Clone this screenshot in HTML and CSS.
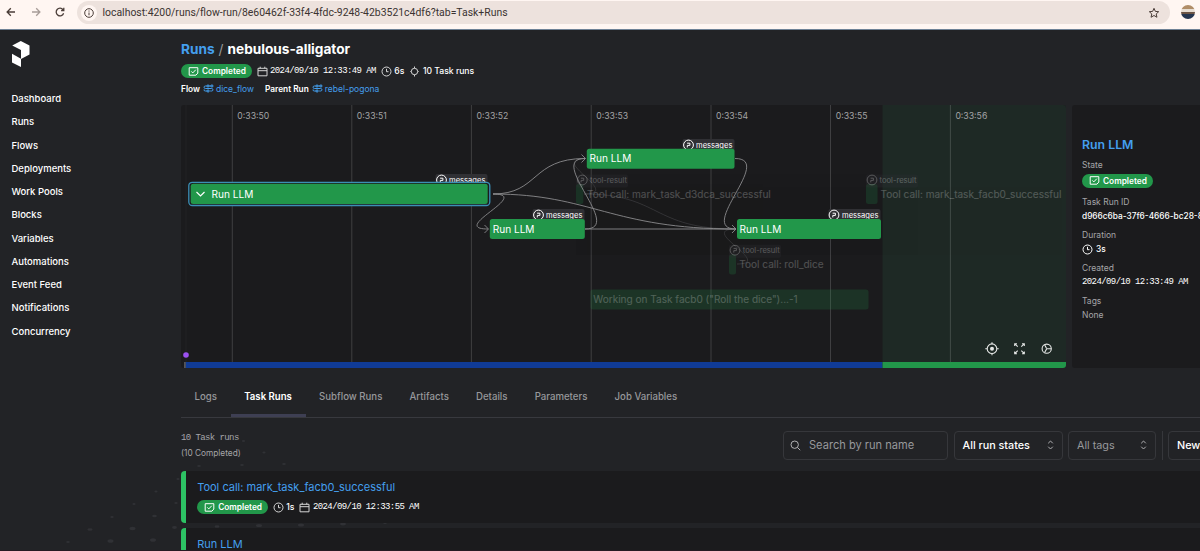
FILE: index.html
```html
<!DOCTYPE html>
<html lang="en">
<head>
    <meta charset="UTF-8">
    <meta name="viewport" content="width=device-width, initial-scale=1.0">
    <title>nebulous-alligator</title>
    <link rel="stylesheet" href="styles.css">
</head>
<body>
    <!-- icons -->
    <svg class="defs" width="0" height="0">
        <symbol id="i-check" viewBox="0 0 11 9"><path d="M1.2.7h8.6v5.4L7.9 8.2H1.2z M3.3 4.4l1.5 1.5 3-3.2"/></symbol>
        <symbol id="i-calendar" viewBox="0 0 11 11"><path d="M1 2.3h9v7.5H1z M1 4.7h9 M3.2.7v1.6 M7.8.7v1.6"/></symbol>
        <symbol id="i-clock" viewBox="0 0 11 11"><path d="M10 5.5a4.5 4.5 0 1 1-9 0 4.5 4.5 0 0 1 9 0z M5.5 2.8v2.9h2"/></symbol>
        <symbol id="i-task" viewBox="0 0 11 11"><path d="M8.7 5.5a3.2 3.2 0 1 1-6.4 0 3.2 3.2 0 0 1 6.4 0z M5.5.5v1.8 M5.5 8.7v1.8 M2.3 5.5h-.9 M8.7 5.5h.9"/></symbol>
        <symbol id="i-flow" viewBox="0 0 11 9"><path d="M4 2H2.3a1.25 1.25 0 0 0 0 2.5h6.4a1.25 1.25 0 0 1 0 2.5H7.2 M4 7H2.3a1.25 1.25 0 0 1-1.2-1.6 M4.2 1.1h1.6v1.8H4.2z M8 1.1h1.8v1.8H8z M4.2 6.1h1.8v1.8H4.2z M5.8 2H8"/></symbol>
        <symbol id="i-updown" viewBox="0 0 7 10"><path d="M1.2 3.3L3.5 1l2.3 2.3 M1.2 6.7L3.5 9l2.3-2.3"/></symbol>
        <symbol id="i-artifact" viewBox="0 0 12 12"><circle cx="6" cy="6" r="4.9"/><path d="M4.8 8.4V6.4h2.6V4.2H4.6"/></symbol>
    </svg>

    <div class="browser">
        <div class="nav-buttons">
            <svg width="10" height="10" viewBox="0 0 10 10"><path d="M9 5H1.2M4.8 1.2L1.1 5l3.7 3.8"/></svg>
            <svg class="muted" width="10" height="10" viewBox="0 0 10 10"><path d="M1 5h7.8M5.2 1.2L8.9 5 5.2 8.8"/></svg>
            <svg width="10" height="10" viewBox="0 0 10 10"><path d="M8.6 6.2A3.8 3.8 0 1 1 8 2.7M8.8.8v2.7H6.1"/></svg>
        </div>
        <div class="address">
            <span class="site-info"><svg width="10" height="10" viewBox="0 0 10 10"><circle cx="5" cy="5" r="4.3"/><path d="M5 4.5v2.8M5 2.5v1.1"/></svg></span>
            <span class="url">localhost:4200/runs/flow-run/8e60462f-33f4-4fdc-9248-42b3521c4df6?tab=Task+Runs</span>
            <svg class="star" width="12" height="12" viewBox="0 0 12 12"><path d="M6 1.3l1.35 3.1 3.35.3-2.5 2.25.75 3.3L6 8.5l-2.95 1.75.75-3.3L1.3 4.7l3.35-.3z"/></svg>
        </div>
        <div class="avatar"></div>
    </div>

    <div class="app">
        <svg class="dots" width="400" height="130" viewBox="0 421 400 130">
            <ellipse cx="68" cy="542" rx="1.8" ry="1"/><ellipse cx="90" cy="529.5" rx="2.6" ry="1.3"/><ellipse cx="110.5" cy="541" rx="3" ry="1.8"/>
            <ellipse cx="112" cy="517" rx="1.7" ry="1"/><ellipse cx="132.5" cy="528.5" rx="3" ry="1.7"/><ellipse cx="134" cy="504" rx="1.6" ry="1"/>
            <ellipse cx="153" cy="540" rx="3" ry="1.8"/><ellipse cx="154.5" cy="516" rx="2.3" ry="1.3"/><ellipse cx="156" cy="491.5" rx="1.6" ry="1"/>
            <ellipse cx="176" cy="503" rx="1.7" ry="1"/><ellipse cx="174.5" cy="527.5" rx="2.4" ry="1.4"/><ellipse cx="178" cy="479" rx="1.6" ry="1"/>
            <ellipse cx="199" cy="466" rx="1.8" ry="1"/><ellipse cx="242" cy="465" rx="1.8" ry="1"/><ellipse cx="284" cy="464" rx="1.8" ry="1"/>
            <ellipse cx="264" cy="452.5" rx="1.6" ry="1"/><ellipse cx="243.5" cy="441" rx="1.6" ry="1"/>
            <ellipse cx="217" cy="526.5" rx="2.4" ry="1.2"/><ellipse cx="259" cy="525.5" rx="3" ry="1.5"/><ellipse cx="301" cy="525" rx="3" ry="1.5"/>
            <ellipse cx="343" cy="524" rx="3" ry="1.4"/><ellipse cx="385" cy="523" rx="1.8" ry="1"/>
        </svg>

        <div class="sidebar">
            <svg class="logo" width="18" height="26" viewBox="0 0 18 26"><path d="M8.8 0L17.5 4.5v9L9 18V9L.2 4.5zM0 12.7L9 17.8V26l-9-4.4z"/></svg>
            <a>Dashboard</a>
            <a>Runs</a>
            <a>Flows</a>
            <a>Deployments</a>
            <a>Work Pools</a>
            <a>Blocks</a>
            <a>Variables</a>
            <a>Automations</a>
            <a>Event Feed</a>
            <a>Notifications</a>
            <a>Concurrency</a>
        </div>

        <div class="content">
            <h1><a>Runs</a><i>/</i>nebulous-alligator</h1>
            <div class="meta">
                <span class="badge"><svg width="11" height="9"><use href="#i-check"/></svg>Completed</span>
                <svg class="icon" width="11" height="11"><use href="#i-calendar"/></svg>
                <span class="mono">2024/09/10 12:33:49 AM</span>
                <svg class="icon" width="11" height="11"><use href="#i-clock"/></svg>
                <span>6s</span>
                <svg class="icon" width="11" height="11"><use href="#i-task"/></svg>
                <span>10 Task runs</span>
            </div>
            <div class="parents">
                <b>Flow</b><svg width="11" height="9"><use href="#i-flow"/></svg><a>dice_flow</a>
                <b class="second">Parent Run</b><svg width="11" height="9"><use href="#i-flow"/></svg><a>rebel-pogona</a>
            </div>

            <div class="panels">
                <svg class="graph" width="885" height="263" viewBox="0 0 885 263">
                    <rect class="tail" x="701.5" y="0" width="183.5" height="257"/>
                    <path class="start" d="M5 0V257"/>
                    <path class="grid" d="M51.3 0V257M170.8 0V257M290.4 0V257M410.2 0V257M530 0V257M649.5 0V257M769.4 0V257"/>
                    <g class="times">
                        <text x="56.3" y="14">0:33:50</text>
                        <text x="175.8" y="14">0:33:51</text>
                        <text x="295.6" y="14">0:33:52</text>
                        <text x="415.2" y="14">0:33:53</text>
                        <text x="535" y="14">0:33:54</text>
                        <text x="654.7" y="14">0:33:55</text>
                        <text x="774.4" y="14">0:33:56</text>
                    </g>

                    <!-- dimmed runs -->
                    <g class="faded-edges">
                        <path d="M403 89C443 89 365 53.5 405 53.5M403 89C480 89 470 124 555 124M556 159C594 159 515 124 555 124"/>
                    </g>
                    <g class="faded">
                        <rect class="run" x="395" y="79" width="7.3" height="20" rx="2.5"/>
                        <rect class="run" x="685" y="79" width="11.5" height="20" rx="2.5"/>
                        <rect class="run" x="548" y="149.5" width="7" height="20" rx="2.5"/>
                        <rect class="run" x="409.5" y="184.5" width="278" height="20" rx="2.5"/>
                    </g>
                    <g class="faded-text">
                        <text x="406" y="92.5">Tool call: mark_task_d3dca_successful</text>
                        <text x="699.6" y="92.5">Tool call: mark_task_facb0_successful</text>
                        <text x="558.3" y="162.8">Tool call: roll_dice</text>
                        <text x="412.3" y="197.8">Working on Task facb0 ("Roll the dice")...-1</text>
                    </g>
                    <g class="artifact dim">
                        <rect x="395" y="69.5" width="52" height="13" rx="2"/><use href="#i-artifact" x="395.3" y="69" width="12" height="12"/><text x="409" y="78">tool-result</text>
                        <rect x="685" y="69.5" width="52" height="13" rx="2"/><use href="#i-artifact" x="685" y="69" width="12" height="12"/><text x="698.6" y="78">tool-result</text>
                        <rect x="548" y="139.7" width="52" height="13" rx="2"/><use href="#i-artifact" x="548" y="139.2" width="12" height="12"/><text x="561.8" y="148.2">tool-result</text>
                    </g>

                    <g class="artifact">
                        <rect x="254.5" y="69" width="52" height="13" rx="2"/><use href="#i-artifact" x="254.5" y="69" width="12" height="12"/><text x="268" y="78">messages</text>
                        <rect x="351.5" y="104" width="52" height="13" rx="2"/><use href="#i-artifact" x="351.5" y="104" width="12" height="12"/><text x="365" y="113">messages</text>
                        <rect x="501.5" y="34" width="52" height="13" rx="2"/><use href="#i-artifact" x="501.5" y="34" width="12" height="12"/><text x="515" y="43">messages</text>
                        <rect x="647.5" y="104" width="52" height="13" rx="2"/><use href="#i-artifact" x="647" y="104" width="12" height="12"/><text x="661" y="113">messages</text>
                    </g>

                    <g class="edges">
                        <path d="M312 89C358 89 350 53.5 404 53.5"/>
                        <path d="M312 89C352 89 267 124 307 124"/>
                        <path d="M312 89C410 89 430 124 555 124"/>
                        <path d="M404 124H555"/>
                        <path d="M404 124C444 124 365 53.5 404 53.5"/>
                        <path d="M554 53.5C594 53.5 515 124 555 124"/>
                        <path d="M400.5 49.5l4 4-4 4M303.5 120l4 4-4 4M551 120l4 4-4 4"/>
                    </g>

                    <rect class="selected" x="7.8" y="77.3" width="301" height="23.2" rx="3.5"/>
                    <rect class="run" x="9.7" y="78.7" width="297" height="20.3" rx="2.5"/>
                    <rect class="run" x="308.8" y="114" width="95" height="20" rx="2.5"/>
                    <rect class="run" x="405.8" y="43.8" width="147.7" height="20" rx="2.5"/>
                    <rect class="run" x="556" y="114" width="144" height="20" rx="2.5"/>
                    <path class="chevron" d="M15.5 87l4 4 4-4"/>
                    <g class="run-names">
                        <text x="30.5" y="92.5">Run LLM</text>
                        <text x="311.7" y="127.6">Run LLM</text>
                        <text x="408.6" y="57.2">Run LLM</text>
                        <text x="558.6" y="127.6">Run LLM</text>
                    </g>

                    <circle class="event" cx="5" cy="250" r="2.8"/>
                    <rect class="running" x="4.5" y="257" width="697" height="6"/>
                    <rect class="grip" x="3" y="257" width="1.8" height="6"/>
                    <rect class="done" x="701.5" y="257" width="183.5" height="6"/>

                    <g class="controls">
                        <circle cx="811" cy="243.7" r="4.8"/><circle class="fill" cx="811" cy="243.7" r="2"/>
                        <path d="M811 237.2v2M811 248.2v2M804.3 243.7h2M815.7 243.7h2"/>
                        <path d="M833.7 241v-2.3h2.3M833.7 238.7l3 3M841 238.7h2.3v2.3M843.3 238.7l-3 3M833.7 246.4v2.3h2.3M833.7 248.7l3-3M841 248.7h2.3v-2.3M843.3 248.7l-3-3"/>
                        <circle cx="865.7" cy="243.7" r="4.6"/>
                        <path d="M863.6 239.8l2 3.6M863.6 247.6l2-3.6M865.7 243.7h4.6"/>
                    </g>
                </svg>

                <div class="details">
                    <h2>Run LLM</h2>
                    <label>State</label>
                    <div class="value state"><span class="badge"><svg width="11" height="9"><use href="#i-check"/></svg>Completed</span></div>
                    <label>Task Run ID</label>
                    <div class="value">d966c6ba-37f6-4666-bc28-8</div>
                    <label>Duration</label>
                    <div class="value"><svg width="11" height="11"><use href="#i-clock"/></svg>3s</div>
                    <label>Created</label>
                    <div class="value mono">2024/09/10 12:33:49 AM</div>
                    <label>Tags</label>
                    <div class="value none">None</div>
                </div>
            </div>

            <div class="tabs">
                <a>Logs</a>
                <a class="active">Task Runs</a>
                <a>Subflow Runs</a>
                <a>Artifacts</a>
                <a>Details</a>
                <a>Parameters</a>
                <a>Job Variables</a>
            </div>

            <div class="toolbar">
                <div class="count">
                    <div class="mono">10 Task runs</div>
                    <div>(10 Completed)</div>
                </div>
                <div class="field search">
                    <svg width="11" height="11" viewBox="0 0 11 11"><circle cx="4.7" cy="4.7" r="3.7"/><path d="M7.4 7.4l2.8 2.8"/></svg>
                    Search by run name
                </div>
                <div class="field states">All run states<svg width="7" height="10"><use href="#i-updown"/></svg></div>
                <div class="field tags">All tags<svg width="7" height="10"><use href="#i-updown"/></svg></div>
                <div class="divider"></div>
                <div class="field sort">New</div>
            </div>

            <div class="run-card">
                <a>Tool call: mark_task_facb0_successful</a>
                <div class="meta">
                    <span class="badge"><svg width="11" height="9"><use href="#i-check"/></svg>Completed</span>
                    <svg class="icon" width="11" height="11"><use href="#i-clock"/></svg>
                    <span>1s</span>
                    <svg class="icon" width="11" height="11"><use href="#i-calendar"/></svg>
                    <span class="mono">2024/09/10 12:33:55 AM</span>
                </div>
            </div>
            <div class="run-card">
                <a>Run LLM</a>
            </div>
        </div>
    </div>
</body>
</html>
```
FILE: styles.css
```css
* {
    box-sizing: border-box;
}
body {
    margin: 0;
    width: 1200px;
    height: 551px;
    overflow: hidden;
    font-family: Inter, sans-serif;
    font-size: 9px;
    color: #fff;
    background-color: #222326;
}
svg {
    flex: none;
    fill: none;
    stroke: currentColor;
    stroke-width: 1;
}
.defs {
    position: absolute;
}
.mono {
    font-family: "Liberation Mono", monospace;
    font-size: 9px;
    letter-spacing: -0.59px;
    white-space: pre;
}

/* browser bar */
.browser {
    display: flex;
    height: 30px;
    padding: 1px 0 0 6px;
    background-color: #fff6f2;
    border-bottom: 1.5px solid #6f8296;
    color: #4a3d38;
}
.nav-buttons {
    display: flex;
    gap: 14.5px;
    padding-top: 6px;
    width: 71px;
}
.nav-buttons svg {
    stroke-width: 1.3;
}
.nav-buttons .muted {
    color: #a89d99;
}
.address {
    display: flex;
    align-items: center;
    width: 1093px;
    height: 23px;
    padding: 0 10px 0 4px;
    border-radius: 12px;
    background-color: #ede2dd;
}
.site-info {
    display: flex;
    align-items: center;
    justify-content: center;
    width: 16px;
    height: 16px;
    border-radius: 50%;
    background-color: #fff6f2;
}
.url {
    flex: 1;
    margin-left: 5.5px;
    font-family: Roboto, sans-serif;
    font-size: 10.43px;
    color: #3b3331;
}
.avatar {
    width: 14px;
    height: 14px;
    margin: 4px 0 0 11px;
    border-radius: 50%;
    background: linear-gradient(#b08d68 0 30%, #e6ddd2 30% 48%, #6b5444 48% 62%, #24354f 62%);
}

/* layout */
.app {
    position: relative;
    display: flex;
    height: 521px;
    overflow: hidden;
    border-bottom: 1px solid #271b22;
}
.dots {
    position: absolute;
    left: 0;
    bottom: -1px;
    fill: #303135;
    stroke: none;
}
.sidebar {
    flex: none;
    display: flex;
    flex-direction: column;
    width: 181px;
    padding: 11px 0 0 11.5px;
}
.sidebar a {
    height: 23.25px;
    line-height: 23.25px;
    font-size: 9.5px;
    font-weight: 500;
}
.logo {
    margin-bottom: 20px;
    fill: #fff;
    stroke: none;
}
.content {
    position: relative;
    flex: none;
    width: 1065px;
}

/* heading */
h1 {
    margin: 11px 0 0;
    height: 18px;
    line-height: 17px;
    font-size: 13.65px;
    font-weight: 700;
}
h1 a, .parents a, .run-card > a, h2 {
    color: #449fee;
}
h1 i {
    margin: 0 4px;
    font-style: normal;
    font-weight: 400;
    color: #999;
}
.meta {
    display: flex;
    align-items: center;
    height: 14px;
    font-size: 8.6px;
    font-weight: 500;
}
h1 + .meta {
    margin-top: 5px;
}
.meta .icon {
    margin: 0 2.5px 0 5px;
    color: #d5d5d5;
}
.badge {
    display: inline-flex;
    align-items: center;
    width: 70.5px;
    height: 14px;
    padding-left: 7px;
    gap: 3px;
    border-radius: 7px;
    background-color: #22974a;
    font-size: 8.3px;
    font-weight: 600;
}
.parents {
    display: flex;
    align-items: center;
    margin-top: 4.5px;
    height: 12px;
    font-size: 8.5px;
}
.parents b {
    font-weight: 600;
    font-size: 8.3px;
}
.parents svg {
    margin: 0 2px 0 3px;
    color: #449fee;
}
.parents .second {
    margin-left: 11px;
}

/* graph */
.panels {
    display: flex;
    gap: 5.5px;
    margin-top: 10.5px;
    height: 263px;
}
.graph {
    border-radius: 3px;
    background-color: #1b1b1d;
}
.graph text {
    stroke: none;
    fill: currentColor;
}
.tail {
    fill: #1e2925;
    stroke: none;
}
.start {
    stroke: #222225;
}
.grid {
    stroke: #fff;
    stroke-opacity: 0.16;
}
.times {
    font-size: 8.7px;
    color: #a3a3a5;
}
.run, .done {
    fill: #22974a;
    stroke: none;
}
.faded {
    opacity: 0.2;
}
.run-names {
    font-size: 10.1px;
}
.faded-text {
    font-size: 10.05px;
    color: #fff;
    opacity: 0.23;
}
.faded-edges {
    stroke: #fff;
    stroke-width: 0.8;
    opacity: 0.15;
}
.edges {
    stroke: #8b8b8d;
    stroke-width: 0.9;
}
.selected {
    fill: #1b1b1d;
    stroke: #3b8fb5;
    stroke-width: 1.3;
}
.chevron {
    stroke: #fff;
    stroke-width: 1.2;
}
.artifact {
    font-size: 7.6px;
}
.artifact rect {
    fill: #303034;
    stroke: none;
}
.dim {
    opacity: 0.27;
}
.event {
    fill: #9b51f0;
    stroke: none;
}
.running {
    fill: #103b96;
    stroke: none;
}
.grip {
    fill: #55565c;
    stroke: none;
}
.controls {
    color: #e4e6e5;
    stroke: #e4e6e5;
    stroke-width: 1.1;
}
.controls .fill {
    fill: #e4e6e5;
    stroke: none;
}

/* selected run details */
.details {
    flex: 1;
    padding: 32px 0 0 10.5px;
    border-radius: 3px;
    background-color: #1b1b1d;
    white-space: nowrap;
}
h2 {
    margin: 0 0 7px;
    height: 15px;
    line-height: 15px;
    font-size: 12.3px;
    font-weight: 600;
}
.details label {
    display: block;
    height: 12px;
    line-height: 12px;
    font-size: 8.5px;
    color: #a5a5a8;
}
.value {
    display: flex;
    align-items: center;
    gap: 3px;
    height: 14px;
    margin: 1px 0 6px;
    font-size: 8.3px;
    font-weight: 500;
}
.value.state {
    margin: 2.5px 0 8.5px;
}
.value.mono {
    font-size: 9px;
}
.none {
    font-size: 8.5px;
    font-weight: 400;
    color: #a5a5a8;
}

/* tabs */
.tabs {
    display: flex;
    margin-top: 10px;
    height: 39.5px;
    border-bottom: 1px solid #38393e;
}
.tabs a {
    padding: 0 13.6px;
    height: 39px;
    line-height: 38px;
    font-size: 9.63px;
    font-weight: 500;
    color: #97989b;
}
.tabs .active {
    color: #fff;
    font-weight: 600;
    border-bottom: 3px solid #3e3f53;
}

/* filters */
.toolbar {
    display: flex;
    gap: 5.5px;
    padding-top: 13px;
    height: 53px;
}
.count {
    flex: none;
    width: 596.5px;
    line-height: 15px;
    font-size: 8.3px;
    color: #a5a5a8;
}
.field {
    flex: none;
    display: flex;
    align-items: center;
    justify-content: space-between;
    height: 29.5px;
    padding: 0 8px;
    border: 1px solid #36373b;
    border-radius: 4px;
    font-size: 10.8px;
    font-weight: 500;
    white-space: nowrap;
}
.search {
    justify-content: flex-start;
    gap: 8px;
    width: 165px;
    padding: 0 6px;
    font-size: 11.1px;
    color: #97989b;
    font-weight: 400;
}
.states {
    width: 109px;
}
.tags {
    width: 88px;
    color: #97989b;
    font-weight: 400;
}
.sort {
    width: 78px;
}
.field svg {
    color: #b0b0b3;
}
.divider {
    flex: none;
    width: 1px;
    height: 29px;
    background-color: #36373b;
}

/* task runs */
.run-card {
    height: 52px;
    margin-bottom: 5.7px;
    padding: 9px 0 0 11.2px;
    border-left: 5.5px solid #2dc264;
    border-radius: 4px;
    background-color: #1b1b1d;
}
.run-card > a {
    display: block;
    height: 15px;
    line-height: 15px;
    font-size: 11px;
}
.run-card .meta {
    margin-top: 5.5px;
}
```
